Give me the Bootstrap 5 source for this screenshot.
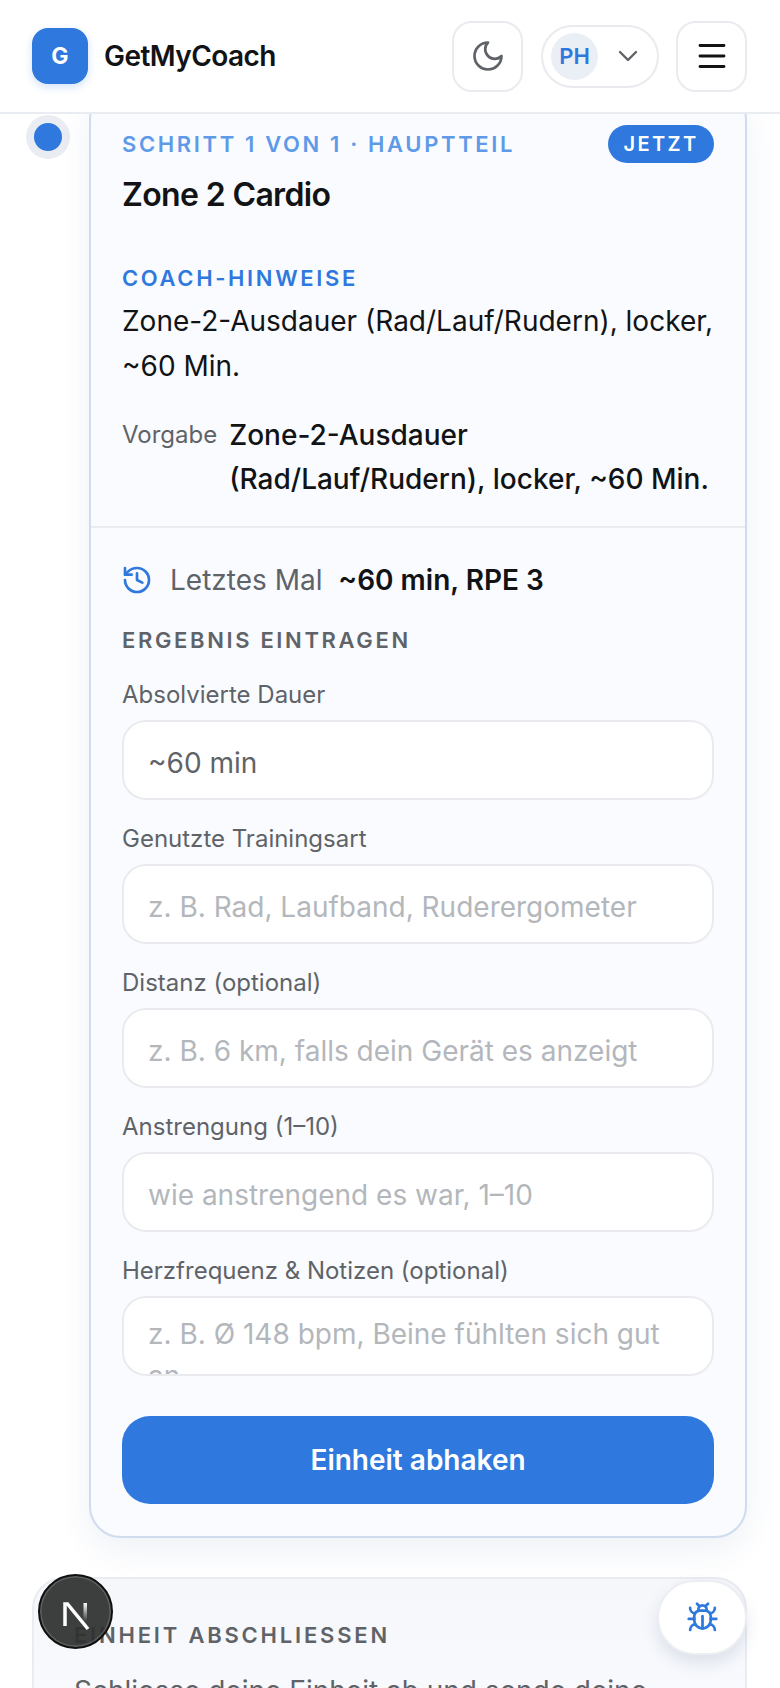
<!doctype html>
<html lang="de">
<head>
<meta charset="utf-8">
<title>GetMyCoach</title>
<link href="https://cdn.jsdelivr.net/npm/bootstrap@5.3.0/dist/css/bootstrap.min.css" rel="stylesheet">
<style>
html,body{height:1688px;overflow:hidden;background:#fff}
body{font-family:Inter,"Liberation Sans",sans-serif;color:#111315;position:relative}
.gm-head{height:114px;padding:0 33px 0 32px;background:#fff;border-bottom:2px solid #e9ecf1;position:relative;z-index:5}
.gm-logo{width:56px;height:56px;border-radius:16px;background:#2f78de;color:#fff;font-weight:700;font-size:23px;box-shadow:0 3px 8px rgba(47,120,222,.22)}
.gm-brand{font-size:28px;font-weight:600;letter-spacing:-.56px;margin-left:16px;color:#111315}
.gm-icbtn{width:71px;height:71px;border:2px solid #e9ebef;border-radius:20px;background:#fff;padding:0}
.gm-pill{width:118px;height:63px;border:2px solid #e9ebef;border-radius:32px;background:#fff;padding:0 0 0 8px;margin:0 17px 0 18px}
.gm-avatar{width:47px;height:47px;border-radius:50%;background:#eaeff6;color:#2f78de;font-weight:600;font-size:22px}
.gm-chev{margin-left:14px}
.gm-main{height:1574px;overflow:hidden;padding:0 33px 0 32px}
.gm-track{width:57px;flex:none;margin-top:1px}
.gm-dot{width:44px;height:44px;border-radius:50%;background:#2f78de;border:8px solid #e9edf3;margin-left:-6px}
.gm-card{margin-top:-26px;border:2px solid #cfdcee;border-radius:32px;background:#f9fbff;box-shadow:0 12px 32px rgba(40,80,140,.08);overflow:hidden}
.gm-top{padding:35px 31px 24px;border-bottom:2px solid #e9ecf1}
.gm-eyebrow{font-size:22px;font-weight:600;letter-spacing:2.64px;color:#5f9ae8;line-height:24px}
.gm-now{height:38px;width:106px;border-radius:19px;background:#2f78de;color:#fff;font-size:20px;font-weight:600;letter-spacing:2.4px}
.gm-title{font-size:32px;font-weight:600;letter-spacing:-.64px;line-height:40px;margin:12px 0 0;color:#111315}
.gm-coach{font-size:22px;font-weight:600;letter-spacing:2.64px;color:#2f78de;line-height:24px;margin-top:51px}
.gm-body{font-size:28px;line-height:44.8px;margin:9px 0 0;color:#111315}
.gm-spec{margin-top:24px;gap:12px}
.gm-spec-k{font-size:24px;color:#5f6368;line-height:44.8px;flex:none}
.gm-spec-v{font-size:28px;font-weight:500;line-height:44.8px}
.gm-bottom{padding:32px 31px 32px}
.gm-last{font-size:28px;line-height:40px;color:#5f6368;gap:17px;margin-left:-1px}
.gm-last b{font-weight:600;color:#111315;margin-left:8px}
.gm-sect{font-size:22px;font-weight:600;letter-spacing:2.64px;color:#5f6368;line-height:24px;margin-top:28px}
.gm-lab{font-size:24px;line-height:28px;color:#5f6368;margin:0 0 11px}
.gm-fields{margin-top:29px;display:flex;flex-direction:column;gap:25px}
.gm-input.form-control{height:80px;border:2px solid #e9ebef;border-radius:24px;background:#fff;font-size:28px;padding:21px 24px 15px;color:#5f6368;line-height:42px;box-shadow:none;resize:none;overflow:hidden}
textarea.gm-input.form-control{padding-top:15px}
.gm-input.form-control::placeholder{color:#b3b7bc;opacity:1}
.gm-go.btn{height:88px;width:100%;margin-top:40px;border:0;border-radius:28px;background:#2f78de;color:#fff;font-size:28px;font-weight:600}
.gm-finish{margin-top:39px;border:2px solid #e9ecf1;border-radius:32px;background:linear-gradient(#f5f7fb,#f9fbff);padding:42px 40px 0}
.gm-finish-t{font-size:22px;font-weight:600;letter-spacing:2.8px;color:#5f6368;line-height:28px}
.gm-finish-b{font-size:28px;line-height:44.8px;color:#5f6368;margin:20px 0 0}
.gm-next{position:absolute;left:38px;top:1574px;width:75px;height:75px;border-radius:50%;background:rgba(46,47,47,.93);border:2px solid #111;box-shadow:inset 0 0 0 1.5px rgba(255,255,255,.18);z-index:8}
.gm-bug{position:absolute;left:657px;top:1580px;width:90px;height:75px;border-radius:38px;background:#fff;border:2px solid #eceef1;box-shadow:0 8px 16px rgba(40,60,100,.12);z-index:8}
</style>
</head>
<body>
<header class="gm-head d-flex align-items-center">
  <div class="gm-logo d-flex align-items-center justify-content-center">G</div>
  <span class="gm-brand">GetMyCoach</span>
  <div class="d-flex align-items-center ms-auto">
    <button class="gm-icbtn d-flex align-items-center justify-content-center" aria-label="Design">
      <svg width="36" height="36" viewBox="0 0 24 24" fill="none" stroke="#5f6368" stroke-width="1.800" stroke-linecap="round" stroke-linejoin="round"><path d="M12 3a6 6 0 0 0 9 9 9 9 0 1 1-9-9Z"/></svg>
    </button>
    <button class="gm-pill d-flex align-items-center" aria-label="Konto">
      <span class="gm-avatar d-flex align-items-center justify-content-center">PH</span>
      <svg class="gm-chev" width="32" height="32" viewBox="0 0 24 24" fill="none" stroke="#5f6368" stroke-width="1.800" stroke-linecap="round" stroke-linejoin="round"><path d="m6 9 6 6 6-6"/></svg>
    </button>
    <button class="gm-icbtn d-flex align-items-center justify-content-center" aria-label="Menü">
      <svg width="36" height="36" viewBox="0 0 24 24" fill="none" stroke="#111315" stroke-width="1.900" stroke-linecap="round"><path d="M4 5h16M4 12h16M4 19h16"/></svg>
    </button>
  </div>
</header>
<main class="gm-main">
  <div class="d-flex">
    <div class="gm-track"><div class="gm-dot"></div></div>
    <section class="gm-card flex-grow-1">
      <div class="gm-top">
        <div class="d-flex align-items-center justify-content-between">
          <span class="gm-eyebrow">SCHRITT 1 VON 1 · HAUPTTEIL</span>
          <span class="gm-now d-flex align-items-center justify-content-center">JETZT</span>
        </div>
        <h2 class="gm-title">Zone 2 Cardio</h2>
        <div class="gm-coach">COACH-HINWEISE</div>
        <p class="gm-body">Zone-2-Ausdauer (Rad/Lauf/Rudern), locker, ~60 Min.</p>
        <div class="gm-spec d-flex">
          <span class="gm-spec-k">Vorgabe</span>
          <span class="gm-spec-v">Zone-2-Ausdauer (Rad/Lauf/Rudern), locker, ~60 Min.</span>
        </div>
      </div>
      <div class="gm-bottom">
        <div class="gm-last d-flex align-items-center">
          <svg width="32" height="32" viewBox="0 0 24 24" fill="none" stroke="#2f78de" stroke-width="2" stroke-linecap="round" stroke-linejoin="round"><path d="M3 12a9 9 0 1 0 9-9 9.750 9.750 0 0 0-6.740 2.740L3 8"/><path d="M3 3v5h5"/><path d="M12 7v5l4 2"/></svg>
          <span>Letztes Mal <b>~60 min, RPE 3</b></span>
        </div>
        <div class="gm-sect">ERGEBNIS EINTRAGEN</div>
        <div class="gm-fields">
          <div><label class="gm-lab d-block">Absolvierte Dauer</label><input class="form-control gm-input" value="~60 min"></div>
          <div><label class="gm-lab d-block">Genutzte Trainingsart</label><input class="form-control gm-input" placeholder="z. B. Rad, Laufband, Ruderergometer"></div>
          <div><label class="gm-lab d-block">Distanz (optional)</label><input class="form-control gm-input" placeholder="z. B. 6 km, falls dein Gerät es anzeigt"></div>
          <div><label class="gm-lab d-block">Anstrengung (1–10)</label><input class="form-control gm-input" placeholder="wie anstrengend es war, 1–10"></div>
          <div><label class="gm-lab d-block">Herzfrequenz &amp; Notizen (optional)</label><textarea class="form-control gm-input" rows="1" placeholder="z. B. Ø 148 bpm, Beine fühlten sich gut an"></textarea></div>
        </div>
        <button class="btn gm-go">Einheit abhaken</button>
      </div>
    </section>
  </div>
  <section class="gm-finish">
    <div class="gm-finish-t">EINHEIT ABSCHLIESSEN</div>
    <p class="gm-finish-b">Schliesse deine Einheit ab und sende deine Ergebnisse an deinen Coach.</p>
  </section>
</main>
<div class="gm-next d-flex align-items-center justify-content-center" aria-label="Next.js">
  <svg width="40" height="40" viewBox="0 0 40 40" fill="none"><defs><linearGradient id="nfade" x1="0" y1="0" x2="0" y2="1"><stop offset="0" stop-color="#fff"/><stop offset="1" stop-color="#fff" stop-opacity="0"/></linearGradient></defs><path d="M9 34V12h2.500L32 37" stroke="#fff" stroke-width="3.500"/><rect x="27.500" y="11" width="3.500" height="18" fill="url(#nfade)"/></svg>
</div>
<div class="gm-bug d-flex align-items-center justify-content-center" aria-label="Fehler melden">
  <svg width="33" height="33" viewBox="0 0 24 24" fill="none" stroke="#2f78de" stroke-width="2" stroke-linecap="round" stroke-linejoin="round"><path d="m8 2 1.880 1.880"/><path d="M14.120 3.880 16 2"/><path d="M9 7.130v-1a3 3 0 1 1 6 0v1"/><path d="M12 20c-3.300 0-6-2.700-6-6v-3a4 4 0 0 1 4-4h4a4 4 0 0 1 4 4v3c0 3.300-2.700 6-6 6"/><path d="M12 20v-9"/><path d="M6.530 9C4.600 8.800 3 7.100 3 5"/><path d="M6 13H2"/><path d="M3 21c0-2.100 1.700-3.900 3.800-4"/><path d="M20.970 5c0 2.100-1.600 3.800-3.500 4"/><path d="M22 13h-4"/><path d="M17.200 17c2.100.1 3.800 1.900 3.800 4"/></svg>
</div>
<script src="https://cdn.jsdelivr.net/npm/bootstrap@5.3.0/dist/js/bootstrap.bundle.min.js"></script>
</body>
</html>
